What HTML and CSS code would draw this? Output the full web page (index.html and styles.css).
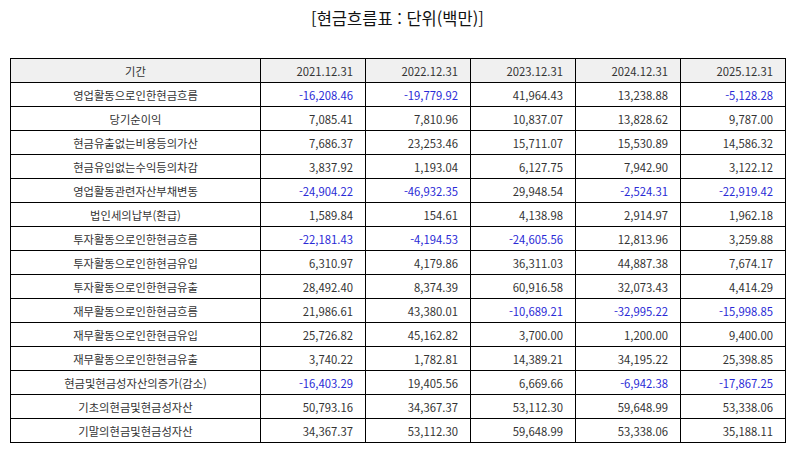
FILE: index.html
```html
<!DOCTYPE html>
<html lang="ko">
<head>
<meta charset="utf-8">
<link rel="stylesheet" href="styles.css">
</head>
<body>
<div class="page">
  <h1 class="title">[현금흐름표 : 단위(백만)]</h1>
  <table class="cf">
    <colgroup><col class="c-label"><col class="c-num"><col class="c-num"><col class="c-num"><col class="c-num"><col class="c-num"></colgroup>
    <thead>
      <tr><th class="lbl">기간</th><th>2021.12.31</th><th>2022.12.31</th><th>2023.12.31</th><th>2024.12.31</th><th>2025.12.31</th></tr>
    </thead>
    <tbody>
      <tr><td class="lbl">영업활동으로인한현금흐름</td><td class="neg">-16,208.46</td><td class="neg">-19,779.92</td><td>41,964.43</td><td>13,238.88</td><td class="neg">-5,128.28</td></tr>
      <tr><td class="lbl">당기순이익</td><td>7,085.41</td><td>7,810.96</td><td>10,837.07</td><td>13,828.62</td><td>9,787.00</td></tr>
      <tr><td class="lbl">현금유출없는비용등의가산</td><td>7,686.37</td><td>23,253.46</td><td>15,711.07</td><td>15,530.89</td><td>14,586.32</td></tr>
      <tr><td class="lbl">현금유입없는수익등의차감</td><td>3,837.92</td><td>1,193.04</td><td>6,127.75</td><td>7,942.90</td><td>3,122.12</td></tr>
      <tr><td class="lbl">영업활동관련자산부채변동</td><td class="neg">-24,904.22</td><td class="neg">-46,932.35</td><td>29,948.54</td><td class="neg">-2,524.31</td><td class="neg">-22,919.42</td></tr>
      <tr><td class="lbl">법인세의납부(환급)</td><td>1,589.84</td><td>154.61</td><td>4,138.98</td><td>2,914.97</td><td>1,962.18</td></tr>
      <tr><td class="lbl">투자활동으로인한현금흐름</td><td class="neg">-22,181.43</td><td class="neg">-4,194.53</td><td class="neg">-24,605.56</td><td>12,813.96</td><td>3,259.88</td></tr>
      <tr><td class="lbl">투자활동으로인한현금유입</td><td>6,310.97</td><td>4,179.86</td><td>36,311.03</td><td>44,887.38</td><td>7,674.17</td></tr>
      <tr><td class="lbl">투자활동으로인한현금유출</td><td>28,492.40</td><td>8,374.39</td><td>60,916.58</td><td>32,073.43</td><td>4,414.29</td></tr>
      <tr><td class="lbl">재무활동으로인한현금흐름</td><td>21,986.61</td><td>43,380.01</td><td class="neg">-10,689.21</td><td class="neg">-32,995.22</td><td class="neg">-15,998.85</td></tr>
      <tr><td class="lbl">재무활동으로인한현금유입</td><td>25,726.82</td><td>45,162.82</td><td>3,700.00</td><td>1,200.00</td><td>9,400.00</td></tr>
      <tr><td class="lbl">재무활동으로인한현금유출</td><td>3,740.22</td><td>1,782.81</td><td>14,389.21</td><td>34,195.22</td><td>25,398.85</td></tr>
      <tr><td class="lbl">현금및현금성자산의증가(감소)</td><td class="neg">-16,403.29</td><td>19,405.56</td><td>6,669.66</td><td class="neg">-6,942.38</td><td class="neg">-17,867.25</td></tr>
      <tr><td class="lbl">기초의현금및현금성자산</td><td>50,793.16</td><td>34,367.37</td><td>53,112.30</td><td>59,648.99</td><td>53,338.06</td></tr>
      <tr><td class="lbl">기말의현금및현금성자산</td><td>34,367.37</td><td>53,112.30</td><td>59,648.99</td><td>53,338.06</td><td>35,188.11</td></tr>
    </tbody>
  </table>
</div>
</body>
</html>
```
FILE: styles.css
```css
html, body {
  margin: 0;
  padding: 0;
  background: #ffffff;
}
body {
  font-family: "Noto Sans CJK KR", "Noto Sans", sans-serif;
  color: #333333;
}
.page {
  padding: 6px 9px 0 10px;
}
.title {
  margin: 0 0 28px 0;
  text-align: center;
  font-size: 16.5px;
  font-weight: normal;
  line-height: 24px;
  color: #111111;
}
.cf {
  width: 776px;
  border-collapse: collapse;
  table-layout: fixed;
  font-size: 11.3px;
}
.c-label { width: 250px; }
.c-num { width: 105px; }
.cf th, .cf td {
  border: 1px solid #000000;
  height: 23px;
  padding: 0 12px 0 4px;
  text-align: right;
  font-weight: normal;
  line-height: 14px;
  white-space: nowrap;
}
.cf thead th {
  background: #f0f0f0;
}
.cf .lbl {
  text-align: center;
  padding: 0 4px;
}
.cf .neg {
  color: #2a2ad6;
}
```
